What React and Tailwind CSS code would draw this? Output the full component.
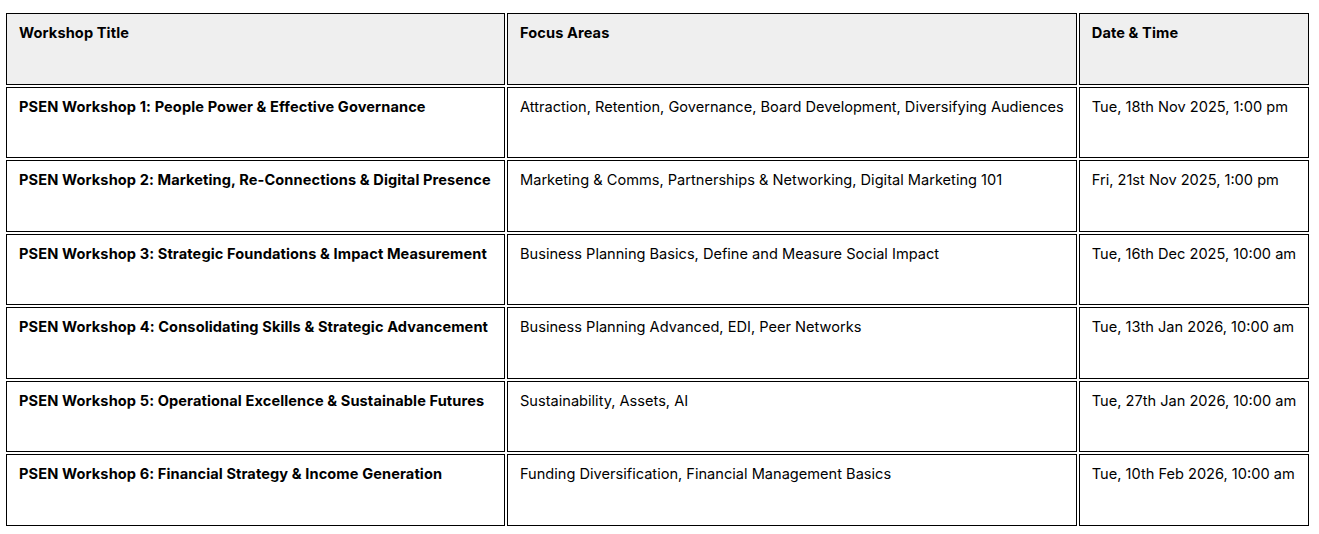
import React from "react";

const rows = [
  {
    title: "PSEN Workshop 1: People Power & Effective Governance",
    focus: "Attraction, Retention, Governance, Board Development, Diversifying Audiences",
    date: "Tue, 18th Nov 2025, 1:00 pm",
  },
  {
    title: "PSEN Workshop 2: Marketing, Re-Connections & Digital Presence",
    focus: "Marketing & Comms, Partnerships & Networking, Digital Marketing 101",
    date: "Fri, 21st Nov 2025, 1:00 pm",
  },
  {
    title: "PSEN Workshop 3: Strategic Foundations & Impact Measurement",
    focus: "Business Planning Basics, Define and Measure Social Impact",
    date: "Tue, 16th Dec 2025, 10:00 am",
  },
  {
    title: "PSEN Workshop 4: Consolidating Skills & Strategic Advancement",
    focus: "Business Planning Advanced, EDI, Peer Networks",
    date: "Tue, 13th Jan 2026, 10:00 am",
  },
  {
    title: "PSEN Workshop 5: Operational Excellence & Sustainable Futures",
    focus: "Sustainability, Assets, AI",
    date: "Tue, 27th Jan 2026, 10:00 am",
  },
  {
    title: "PSEN Workshop 6: Financial Strategy & Income Generation",
    focus: "Funding Diversification, Financial Management Basics",
    date: "Tue, 10th Feb 2026, 10:00 am",
  },
];

const cell = "border border-black align-top px-3 pt-[9px] h-[71.5px] text-left whitespace-nowrap";

export default function App() {
  return (
    <div className="bg-white pl-[4px] pt-[11px] font-['Inter',sans-serif] text-[14.6px] leading-[20px] text-black">
      <table className="border-separate border-spacing-[2px] table-fixed">
        <thead>
          <tr className="bg-[#efefef]">
            <th className={`${cell} w-[499px] font-bold tracking-[0.1px]`}>Workshop Title</th>
            <th className={`${cell} w-[569px] font-bold tracking-[0.1px]`}>Focus Areas</th>
            <th className={`${cell} w-[228px] font-bold tracking-[0.1px]`}>Date &amp; Time</th>
          </tr>
        </thead>
        <tbody>
          {rows.map((r) => (
            <tr key={r.title}>
              <td className={`${cell} font-bold tracking-[0.1px]`}>{r.title}</td>
              <td className={cell}>{r.focus}</td>
              <td className={cell}>{r.date}</td>
            </tr>
          ))}
        </tbody>
      </table>
    </div>
  );
}
